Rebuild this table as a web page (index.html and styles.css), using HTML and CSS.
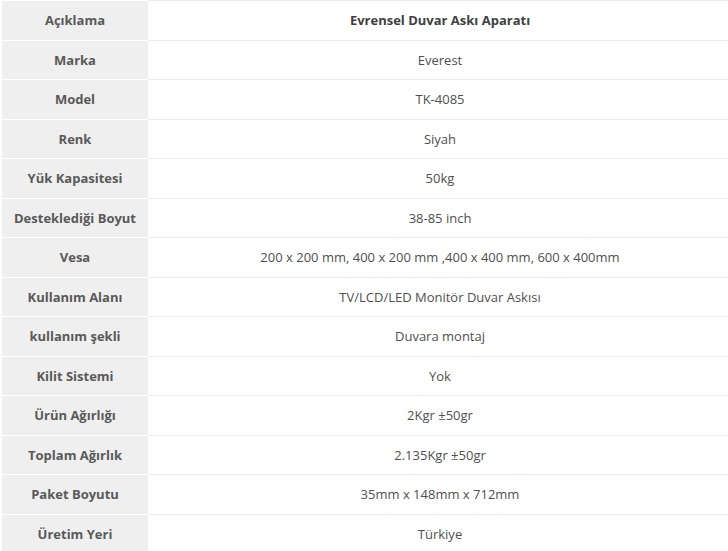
FILE: index.html
```html
<!DOCTYPE html>
<html lang="tr">
<head>
<meta charset="utf-8">
<link rel="stylesheet" href="styles.css">
</head>
<body>
<div class="specs">
  <div class="row"><div class="label">Açıklama</div><div class="value strong">Evrensel Duvar Askı Aparatı</div></div>
  <div class="row"><div class="label">Marka</div><div class="value">Everest</div></div>
  <div class="row"><div class="label">Model</div><div class="value">TK-4085</div></div>
  <div class="row"><div class="label">Renk</div><div class="value">Siyah</div></div>
  <div class="row"><div class="label">Yük Kapasitesi</div><div class="value">50kg</div></div>
  <div class="row"><div class="label">Desteklediği Boyut</div><div class="value">38-85 inch</div></div>
  <div class="row"><div class="label">Vesa</div><div class="value">200 x 200 mm, 400 x 200 mm ,400 x 400 mm, 600 x 400mm</div></div>
  <div class="row"><div class="label">Kullanım Alanı</div><div class="value">TV/LCD/LED Monitör Duvar Askısı</div></div>
  <div class="row"><div class="label">kullanım şekli</div><div class="value">Duvara montaj</div></div>
  <div class="row"><div class="label">Kilit Sistemi</div><div class="value">Yok</div></div>
  <div class="row"><div class="label">Ürün Ağırlığı</div><div class="value">2Kgr ±50gr</div></div>
  <div class="row"><div class="label">Toplam Ağırlık</div><div class="value">2.135Kgr ±50gr</div></div>
  <div class="row"><div class="label">Paket Boyutu</div><div class="value">35mm x 148mm x 712mm</div></div>
  <div class="row"><div class="label">Üretim Yeri</div><div class="value">Türkiye</div></div>
</div>
</body>
</html>
```
FILE: styles.css
```css
html, body {
  margin: 0;
  padding: 0;
  background: #ffffff;
}
body {
  font-family: "Open Sans", "DejaVu Sans", sans-serif;
  font-size: 13px;
  color: #555555;
  overflow: hidden;
}
.specs {
  padding-left: 2px;
}
.row {
  display: grid;
  grid-template-columns: 146px 1fr;
  height: 39.5px;
}
.label, .value {
  display: flex;
  align-items: center;
  justify-content: center;
  box-sizing: border-box;
  border-top: 1.5px solid;
}
.label {
  background: #efefef;
  border-top-color: #ffffff;
  font-weight: 700;
  color: #595959;
}
.value {
  padding-left: 4px;
  border-top-color: #ebebeb;
  color: #4f4f4f;
}
.value.strong {
  font-weight: 700;
  color: #3f3f3f;
}
```
